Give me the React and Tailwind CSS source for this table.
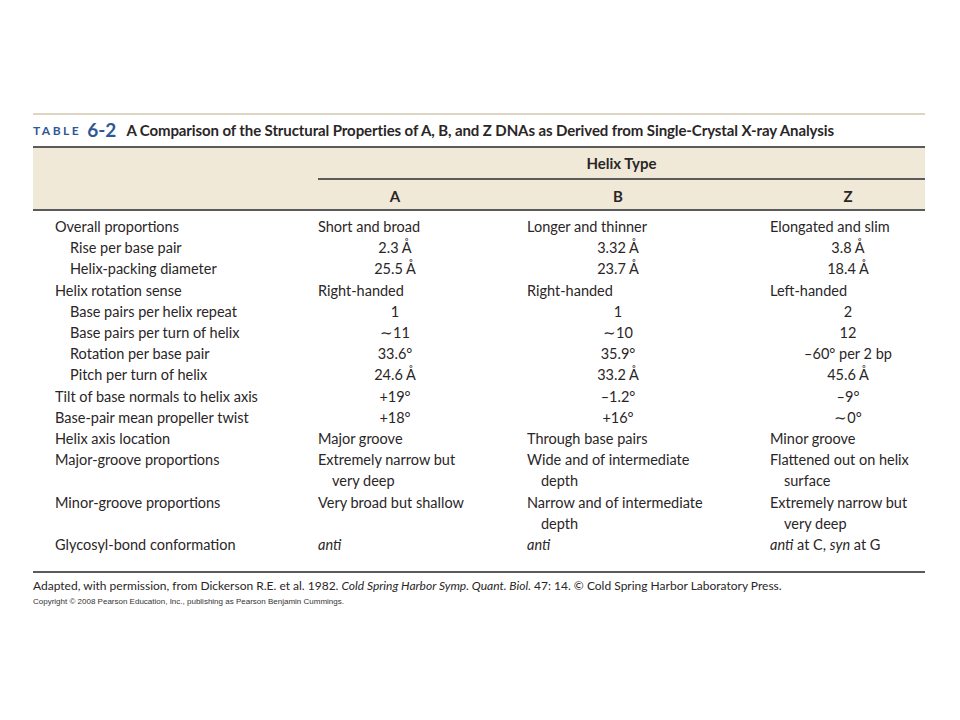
import React from "react";

const COLS = ["A", "B", "Z"];
// box widths so centred values land on the reference column centres
const BOX = ["w-[154px]", "w-[182px]", "w-[156px]"];

const rows = [
  { label: "Overall proportions", text: ["Short and broad", "Longer and thinner", "Elongated and slim"] },
  { label: "Rise per base pair", sub: true, num: ["2.3 Å", "3.32 Å", "3.8 Å"] },
  { label: "Helix-packing diameter", sub: true, num: ["25.5 Å", "23.7 Å", "18.4 Å"] },
  { label: "Helix rotation sense", text: ["Right-handed", "Right-handed", "Left-handed"] },
  { label: "Base pairs per helix repeat", sub: true, num: ["1", "1", "2"] },
  { label: "Base pairs per turn of helix", sub: true, num: ["∼11", "∼10", "12"] },
  { label: "Rotation per base pair", sub: true, num: ["33.6°", "35.9°", "–60° per 2 bp"] },
  { label: "Pitch per turn of helix", sub: true, num: ["24.6 Å", "33.2 Å", "45.6 Å"] },
  { label: "Tilt of base normals to helix axis", num: ["+19°", "–1.2°", "–9°"] },
  { label: "Base-pair mean propeller twist", num: ["+18°", "+16°", "∼0°"] },
  { label: "Helix axis location", text: ["Major groove", "Through base pairs", "Minor groove"] },
  {
    label: "Major-groove proportions",
    text: [
      ["Extremely narrow but", "very deep"],
      ["Wide and of intermediate", "depth"],
      ["Flattened out on helix", "surface"],
    ],
  },
  {
    label: "Minor-groove proportions",
    text: [
      "Very broad but shallow",
      ["Narrow and of intermediate", "depth"],
      ["Extremely narrow but", "very deep"],
    ],
  },
  {
    label: "Glycosyl-bond conformation",
    text: [
      <i key="a">anti</i>,
      <i key="b">anti</i>,
      <span key="z">
        <i>anti</i> at C, <i>syn</i> at G
      </span>,
    ],
  },
];

function TextCell({ value }) {
  if (Array.isArray(value)) {
    return (
      <div>
        <div>{value[0]}</div>
        <div className="pl-[14px]">{value[1]}</div>
      </div>
    );
  }
  return <div>{value}</div>;
}

export default function App() {
  return (
    <div className="w-[960px] h-[720px] bg-white text-[#2a2627] font-['Lato',sans-serif]">
      <div className="pt-[113px] pl-[33px]">
        <div className="w-[892px]">
          <div className="h-[2px] bg-[#ddd6c3]" />
          <div className="h-[31px] flex items-center">
            <span className="text-[12px] font-bold tracking-[2.5px] text-[#2f5896]">TABLE</span>
            <span className="ml-[6px] text-[19px] font-bold text-[#2f5896]">6-2</span>
            <span className="ml-[10px] text-[15px] font-bold tracking-[-0.1px]">
              A Comparison of the Structural Properties of A, B, and Z DNAs as Derived from Single-Crystal X-ray Analysis
            </span>
          </div>
          <div className="h-[2px] bg-[#5b5b5b]" />
          <div className="bg-[#f0e9d7]">
            <div className="h-[30px] flex items-center pl-[285px]">
              <div className="flex-1 text-center text-[15px] font-bold">Helix Type</div>
            </div>
            <div className="ml-[285px] h-[2px] bg-[#5b5b5b]" />
            <div className="h-[29px] pt-[3px] grid grid-cols-[285px_209px_243px_155px] items-center text-[15px] font-bold">
              <div />
              {COLS.map((c, i) => (
                <div key={c} className={`${BOX[i]} text-center`}>
                  {c}
                </div>
              ))}
            </div>
          </div>
          <div className="h-[2px] bg-[#5b5b5b]" />
          <div className="pt-[5px] pb-[16px] grid grid-cols-[285px_209px_243px_155px] text-[14.5px] leading-[21.2px]">
            {rows.map((r) => (
              <React.Fragment key={r.label}>
                <div className={r.sub ? "pl-[37px]" : "pl-[22px]"}>{r.label}</div>
                {[0, 1, 2].map((i) =>
                  r.num ? (
                    <div key={i} className={`${BOX[i]} text-center whitespace-nowrap`}>
                      {r.num[i]}
                    </div>
                  ) : (
                    <TextCell key={i} value={r.text[i]} />
                  )
                )}
              </React.Fragment>
            ))}
          </div>
          <div className="h-[2px] bg-[#5b5b5b]" />
          <div className="pt-[3px] text-[12px] leading-[19px]">
            Adapted, with permission, from Dickerson R.E. et al. 1982. <i>Cold Spring Harbor Symp. Quant. Biol.</i> 47:
            14. © Cold Spring Harbor Laboratory Press.
          </div>
          <div className="pt-[1px] text-[8px] leading-[11px] text-[#333] font-['Liberation_Sans',sans-serif]">
            Copyright © 2008 Pearson Education, Inc., publishing as Pearson Benjamin Cummings.
          </div>
        </div>
      </div>
    </div>
  );
}
